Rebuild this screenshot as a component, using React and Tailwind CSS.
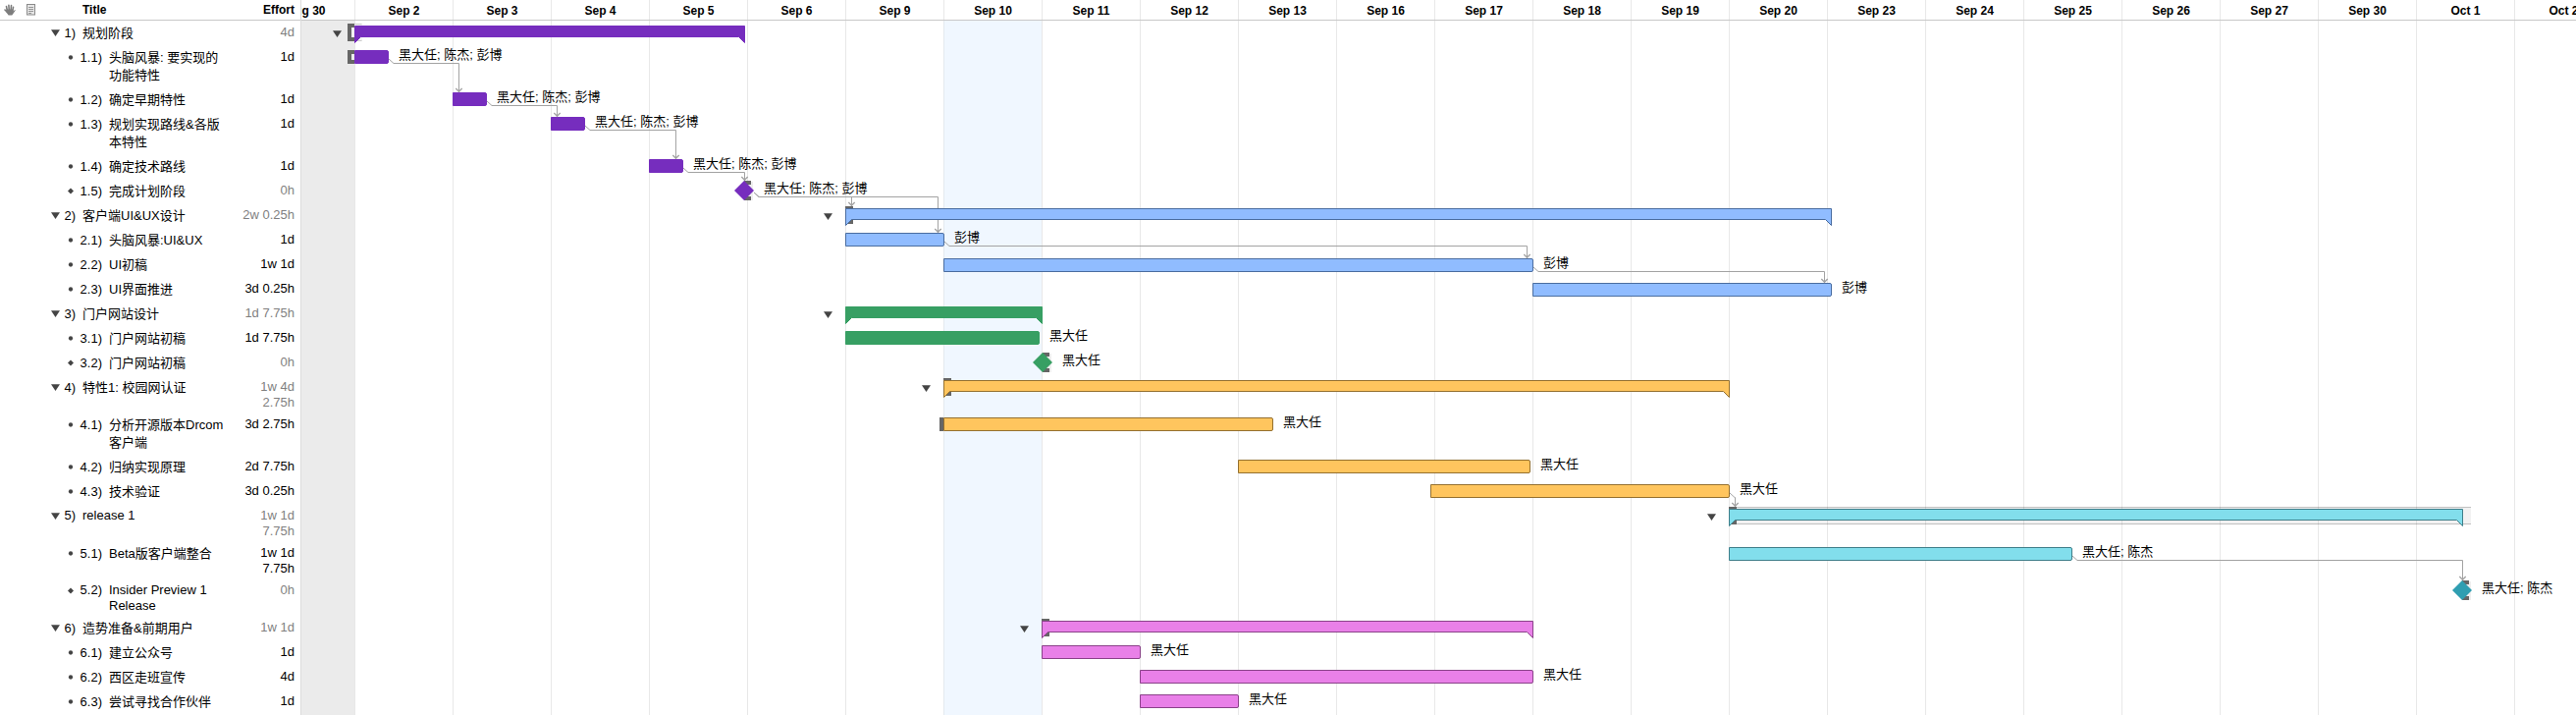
import React from "react";

const HEADINGS = [
  "Aug 30", "Sep 2", "Sep 3", "Sep 4", "Sep 5", "Sep 6", "Sep 9", "Sep 10",
  "Sep 11", "Sep 12", "Sep 13", "Sep 16", "Sep 17", "Sep 18", "Sep 19",
  "Sep 20", "Sep 23", "Sep 24", "Sep 25", "Sep 26", "Sep 27", "Sep 30",
  "Oct 1", "Oct 2",
];

const PURPLE = { fill: "#762dbe", stroke: "#762dbe" };
const BLUE = { fill: "#90bcff", stroke: "#4a6da0" };
const GREEN = { fill: "#379f63", stroke: "#379f63" };
const ORANGE = { fill: "#ffc55e", stroke: "#94702f" };
const CYAN = { fill: "#82deec", stroke: "#3f7f8a" };
const TEAL = { fill: "#2f9eb1", stroke: "#2f9eb1" };
const PINK = { fill: "#e980e8", stroke: "#8a4289" };

// x1 and x2 count pixels from the start of Sep 2 (100 per day); y is the top of the bar.
const TASKS = [
  { no: "1)", type: "group", title: "规划阶段", effort: "4d", x1: 0, x2: 398, y: 5, color: PURPLE },
  { no: "1.1)", type: "task", title: "头脑风暴: 要实现的功能特性", effort: "1d", x1: 0, x2: 35, y: 30, color: PURPLE, who: "黑大任; 陈杰; 彭博" },
  { no: "1.2)", type: "task", title: "确定早期特性", effort: "1d", x1: 100, x2: 135, y: 73, color: PURPLE, who: "黑大任; 陈杰; 彭博" },
  { no: "1.3)", type: "task", title: "规划实现路线&各版本特性", effort: "1d", x1: 200, x2: 235, y: 98, color: PURPLE, who: "黑大任; 陈杰; 彭博" },
  { no: "1.4)", type: "task", title: "确定技术路线", effort: "1d", x1: 300, x2: 335, y: 141, color: PURPLE, who: "黑大任; 陈杰; 彭博" },
  { no: "1.5)", type: "milestone", title: "完成计划阶段", effort: "0h", x1: 387, x2: 407, y: 166, color: PURPLE, who: "黑大任; 陈杰; 彭博" },
  { no: "2)", type: "group", title: "客户端UI&UX设计", effort: "2w 0.25h", x1: 500, x2: 1505, y: 191, color: BLUE, anchor: true },
  { no: "2.1)", type: "task", title: "头脑风暴:UI&UX", effort: "1d", x1: 500, x2: 601, y: 216, color: BLUE, who: "彭博" },
  { no: "2.2)", type: "task", title: "UI初稿", effort: "1w 1d", x1: 600, x2: 1201, y: 242, color: BLUE, who: "彭博" },
  { no: "2.3)", type: "task", title: "UI界面推进", effort: "3d 0.25h", x1: 1200, x2: 1505, y: 267, color: BLUE, who: "彭博" },
  { no: "3)", type: "group", title: "门户网站设计", effort: "1d 7.75h", x1: 500, x2: 701, y: 291, color: GREEN },
  { no: "3.1)", type: "task", title: "门户网站初稿", effort: "1d 7.75h", x1: 500, x2: 698, y: 316, color: GREEN, who: "黑大任" },
  { no: "3.2)", type: "milestone", title: "门户网站初稿", effort: "0h", x1: 691, x2: 711, y: 341, color: GREEN, who: "黑大任" },
  { no: "4)", type: "group", title: "特性1: 校园网认证", effort: "1w 4d 2.75h", x1: 600, x2: 1401, y: 366, color: ORANGE, anchor: true },
  { no: "4.1)", type: "task", title: "分析开源版本Drcom客户端", effort: "3d 2.75h", x1: 600, x2: 936, y: 404, color: ORANGE, who: "黑大任" },
  { no: "4.2)", type: "task", title: "归纳实现原理", effort: "2d 7.75h", x1: 900, x2: 1198, y: 447, color: ORANGE, who: "黑大任" },
  { no: "4.3)", type: "task", title: "技术验证", effort: "3d 0.25h", x1: 1096, x2: 1401, y: 472, color: ORANGE, who: "黑大任" },
  { no: "5)", type: "group", latin: true, title: "release 1", effort: "1w 1d 7.75h", x1: 1400, x2: 2148, y: 497, color: CYAN, anchor: true },
  { no: "5.1)", type: "task", title: "Beta版客户端整合", effort: "1w 1d 7.75h", x1: 1400, x2: 1750, y: 536, color: CYAN, who: "黑大任; 陈杰" },
  { no: "5.2)", type: "milestone", latin: true, title: "Insider Preview 1 Release", effort: "0h", x1: 2137, x2: 2157, y: 573, color: TEAL, who: "黑大任; 陈杰" },
  { no: "6)", type: "group", title: "造势准备&前期用户", effort: "1w 1d", x1: 700, x2: 1201, y: 611, color: PINK, anchor: true },
  { no: "6.1)", type: "task", title: "建立公众号", effort: "1d", x1: 700, x2: 801, y: 636, color: PINK, who: "黑大任" },
  { no: "6.2)", type: "task", title: "西区走班宣传", effort: "4d", x1: 800, x2: 1201, y: 661, color: PINK, who: "黑大任" },
  { no: "6.3)", type: "task", title: "尝试寻找合作伙伴", effort: "1d", x1: 800, x2: 901, y: 686, color: PINK, who: "黑大任" },
];

// Each link leaves (x, y), runs along height `run` and drops onto the task below at `to`.
const LINKS = [
  { x: 35, y: 39, run: 43, to: 106, tip: 73 },
  { x: 135, y: 82, run: 86, to: 206, tip: 98 },
  { x: 235, y: 107, run: 111, to: 327, tip: 141 },
  { x: 335, y: 150, run: 154, to: 397, tip: 163 },
  { x: 407, y: 175, run: 179, to: 506, tip: 189 },
  { x: 407, y: 175, run: 179, to: 594, tip: 216 },
  { x: 601, y: 225, run: 229, to: 1194, tip: 242 },
  { x: 1201, y: 251, run: 255, to: 1497, tip: 267 },
  { x: 1401, y: 481, run: 485, to: 1406, tip: 495 },
  { x: 1750, y: 545, run: 549, to: 2147, tip: 570 },
];

function Triangle() {
  return (
    <svg width="9" height="7" viewBox="0 0 9 7" className="block" aria-hidden="true">
      <path d="M0 0.3H9L4.5 7Z" fill="#444" />
    </svg>
  );
}

function Marker({ type }) {
  return (
    <svg width="7" height="7" viewBox="0 0 7 7" className="block" aria-hidden="true">
      {type === "milestone" ? (
        <path d="M3.5 0L7 3.5L3.5 7L0 3.5Z" fill="#444" />
      ) : (
        <circle cx="3.5" cy="3.5" r="2.5" fill="#444" />
      )}
    </svg>
  );
}

function HandIcon() {
  return (
    <svg width="12" height="12" viewBox="0 0 12 12" className="block" role="img" aria-label="Violations">
      <g stroke="#7d7d7d" strokeWidth="1.6" strokeLinecap="round" fill="none">
        <path d="M3.3 6.5L2.5 2.6M5.2 6L4.9 1.2M7.1 6L7.5 1.6M8.7 7L9.5 3.3M3.4 8.3L1 6" />
      </g>
      <path d="M2.5 5.6L9.5 5.4L9.6 7.4L11.2 5.9L11.8 6.5L9.3 10L8.3 11.6H4.6L2.6 8.8Z" fill="#7d7d7d" />
    </svg>
  );
}

function NoteIcon() {
  return (
    <svg width="10" height="12" viewBox="0 0 10 12" className="block" role="img" aria-label="Notes">
      <rect x="0.5" y="0.5" width="8" height="10.5" fill="#e6e6e6" stroke="#8a8a8a" />
      <path d="M2 3.5H7M2 5.5H7M2 7.5H7M2 9.5H5" stroke="#8f8f8f" strokeWidth="0.9" />
    </svg>
  );
}

function Outline() {
  return (
    <table className="w-[306px] shrink-0 table-fixed border-separate border-spacing-0 text-[13px]">
      <colgroup>
        <col className="w-5" />
        <col className="w-[22px]" />
        <col />
        <col className="w-[66px]" />
      </colgroup>
      <thead>
        <tr className="h-[21px] text-[12px] leading-4">
          <th className="border-b border-[#c8c8c8] p-0 pl-1"><HandIcon /></th>
          <th className="border-b border-[#c8c8c8] p-0 pl-[7px]"><NoteIcon /></th>
          <th className="border-b border-[#c8c8c8] p-0 pl-[42px] text-left font-bold">Title</th>
          <th className="border-b border-[#c8c8c8] p-0 pr-[6px] text-right font-bold">Effort</th>
        </tr>
      </thead>
      <tbody>
        {TASKS.map((t) => {
          const group = t.type === "group";
          const dim = group || t.type === "milestone";
          return (
            <tr key={t.no} className="align-top">
              <td className="p-0" />
              <td className="p-0" />
              <td className={t.latin ? "p-0 pt-1 pr-2 pb-[2px] leading-4" : "p-0 pt-1 pr-2 pb-[3px] leading-[18px]"}>
                <div className="flex">
                  {group ? (
                    <button type="button" aria-label={`Collapse ${t.title}`} className="ml-[10px] flex h-4 w-[10px] shrink-0 items-center">
                      <Triangle />
                    </button>
                  ) : (
                    <span className="ml-[27px] flex h-4 w-[6px] shrink-0 items-center">
                      <Marker type={t.type} />
                    </span>
                  )}
                  <span className={group ? "w-[15px] shrink-0 text-right" : "w-[29px] shrink-0 text-right"}>{t.no}</span>
                  <span className="ml-[7px] min-w-0">{t.title}</span>
                </div>
              </td>
              <td className={dim ? "p-0 pt-1 pr-[6px] pb-[2px] text-right leading-4 text-[#7f7f7f]" : "p-0 pt-1 pr-[6px] pb-[2px] text-right leading-4"}>
                {t.effort}
              </td>
            </tr>
          );
        })}
      </tbody>
    </table>
  );
}

function Shape({ task }) {
  const { type, x1, x2, y, color } = task;
  const l = x1 + 0.5;
  const r = x2 - 0.5;
  const t = y + 0.5;
  if (type === "milestone") {
    const cx = (x1 + x2) / 2;
    const cy = y + 7;
    return (
      <g>
        <rect x={cx} y={cy - 9} width="9" height="19" fill="#efefef" />
        <path d={`M${cx} ${cy - 10}h7v4h-7zM${cx} ${cy + 6}h7v4h-7z`} fill="#666" />
        <path d={`M${cx} ${cy - 10}L${cx + 10} ${cy}L${cx} ${cy + 10}L${cx - 10} ${cy}Z`} fill={color.fill} />
      </g>
    );
  }
  if (type === "group") {
    return (
      <g>
        {task.anchor && <rect x={x1} y={y - 2} width="8" height="18" fill="#666" />}
        <path
          d={`M${l} ${t}H${r}V${t + 17}L${r - 6} ${t + 11}H${l + 6}L${l} ${t + 17}Z`}
          fill={color.fill}
          stroke={color.stroke}
        />
      </g>
    );
  }
  return (
    <path
      d={`M${l} ${t}H${r - 1.5}Q${r} ${t} ${r} ${t + 1.5}V${t + 11.5}Q${r} ${t + 13} ${r - 1.5} ${t + 13}H${l}Z`}
      fill={color.fill}
      stroke={color.stroke}
    />
  );
}

function Chart() {
  return (
    <div className="absolute top-0 left-[54px]">
      <svg width="2320" height="707" viewBox="0 0 2320 707" className="block overflow-visible" aria-hidden="true">
        <g>
          <rect x="-3" y="3" width="11" height="18" fill="#f3f3f3" />
          <path d="M0 3.5H7.5M0 20.5H7.5" stroke="#ccc" />
          <path d="M-7 3H0V7H-3V17H0V21H-7Z" fill="#666" />
          <path d="M-7 30H0V34H-3V40H0V44H-7Z" fill="#666" />
          <rect x="596" y="404" width="4" height="14" fill="#666" />
          <rect x="1400" y="495" width="756" height="18" fill="#000" fillOpacity="0.05" />
          <path d="M1400 495.5H2156M1400 512.5H2156" stroke="#000" strokeOpacity="0.2" />
        </g>
        <g fill="none" stroke="#a3a3a3">
          {LINKS.map((k) => (
            <path key={`${k.x}-${k.to}`} d={`M${k.x} ${k.y}L${k.x + 5} ${k.run + 0.5}H${k.to + 0.5}V${k.tip}`} />
          ))}
        </g>
        {TASKS.map((t) => (
          <Shape key={t.no} task={t} />
        ))}
        <g fill="none" stroke="#a3a3a3" strokeWidth="1.3">
          {LINKS.map((k) => (
            <path
              key={`${k.x}-${k.to}`}
              d={`M${k.to - 2.7} ${k.tip - 4}L${k.to + 0.5} ${k.tip - 0.7}L${k.to + 3.7} ${k.tip - 4}`}
            />
          ))}
        </g>
      </svg>
      {TASKS.map((t) =>
        t.type === "group" ? (
          <button
            key={t.no}
            type="button"
            aria-label={`Collapse ${t.title}`}
            className="absolute"
            style={{ left: t.x1 - 22, top: t.y + 5 }}
          >
            <Triangle />
          </button>
        ) : (
          <span
            key={t.no}
            className="absolute text-[13px] leading-4 whitespace-nowrap"
            style={{ left: t.x2 + 10, top: t.y - 3 }}
          >
            {t.who}
          </span>
        )
      )}
    </div>
  );
}

function columnClass(day) {
  if (day === "Aug 30") return "w-[100px] shrink-0 border-l border-[#e8e8e8] bg-[#ebebeb]";
  if (day === "Sep 10") return "w-[100px] shrink-0 border-l border-[#e4e9ee] bg-[#f0f7ff]";
  return "w-[100px] shrink-0 border-l border-[#e8e8e8]";
}

export default function App() {
  return (
    <main className="flex min-h-screen items-stretch overflow-hidden bg-white font-['Liberation_Sans','Noto_Sans_CJK_SC',sans-serif] text-black">
      <div className="shrink-0">
        <Outline />
      </div>
      <section aria-label="Timeline" className="flex min-w-0 flex-1 flex-col overflow-hidden border-l border-[#dcdcdc]">
        <div className="flex h-[21px] border-b border-[#c8c8c8]">
          <div className="-ml-[46px] flex">
            {HEADINGS.map((day) => (
              <div key={day} className="w-[100px] shrink-0 border-l border-[#e8e8e8] pt-[3px] text-center text-[12px] leading-4 font-bold">
                {day}
              </div>
            ))}
          </div>
        </div>
        <div className="relative flex-1">
          <div className="-ml-[46px] flex h-full">
            {HEADINGS.map((day) => (
              <div key={day} className={columnClass(day)} />
            ))}
          </div>
          <Chart />
        </div>
      </section>
    </main>
  );
}
